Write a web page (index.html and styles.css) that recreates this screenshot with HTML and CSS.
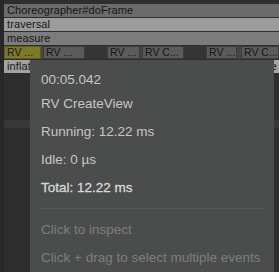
FILE: index.html
```html
<!DOCTYPE html>
<html>
<head>
<meta charset="utf-8">
<link rel="stylesheet" href="styles.css">
</head>
<body>
<div class="page">
  <div class="track">
    <div class="row row-frame">Choreographer#doFrame</div>
    <div class="row row-trav">traversal</div>
    <div class="row row-meas">measure</div>
    <div class="row row-rv">
      <div class="slice slice-sel w37">RV ...</div>
      <div class="gap2"></div>
      <div class="slice w42">RV ...</div>
      <div class="empty w22"></div>
      <div class="slice w33">RV ...</div>
      <div class="gap2"></div>
      <div class="slice w42">RV C...</div>
      <div class="empty w22"></div>
      <div class="slice w31">RV ...</div>
      <div class="gap3"></div>
      <div class="slice grow">RV C...</div>
    </div>
    <div class="row row-infl"><span>inflate</span><span class="tail">inflate</span></div>
    <div class="spacer"></div>
    <div class="band"></div>
  </div>
  <div class="tooltip">
    <div class="line first">00:05.042</div>
    <div class="line">RV CreateView</div>
    <div class="line">Running: 12.22 ms</div>
    <div class="line">Idle: 0 µs</div>
    <div class="line total">Total: 12.22 ms</div>
    <div class="sep"></div>
    <div class="line hint">Click to inspect</div>
    <div class="line hint">Click + drag to select multiple events</div>
  </div>
</div>
</body>
</html>
```

FILE: styles.css
```css
html, body {
  margin: 0;
  padding: 0;
  background: #282828;
  width: 279px;
  height: 272px;
  overflow: hidden;
}
.page {
  position: relative;
  width: 279px;
  height: 272px;
  padding-left: 4px;
  box-sizing: border-box;
  overflow: hidden;
}
.track {
  background: #2e2e2e;
  height: 272px;
  padding-top: 4px;
  box-sizing: border-box;
  display: flex;
  flex-direction: column;
  gap: 1px;
  font-family: "Liberation Sans", Arial, sans-serif;
  font-size: 11px;
  letter-spacing: 0.1px;
  color: #161616;
}
.row {
  height: 13px;
  line-height: 13px;
  padding-left: 3px;
  white-space: nowrap;
  overflow: hidden;
  flex-shrink: 0;
}
.row-frame { background: #6b6b6b; }
.row-trav { background: #9c9c9c; }
.row-meas { background: #7c7c7c; }
.row-infl {
  background: #a3a3a3;
  display: flex;
  justify-content: space-between;
  padding-right: 2px;
}
.row-rv {
  display: flex;
  padding-left: 0;
  background: #454545;
}
.slice {
  box-sizing: border-box;
  border: 1px solid #3c3c3c;
  background: #5b5b5b;
  padding-left: 2px;
  font-size: 10.5px;
  letter-spacing: 0;
  line-height: 11px;
  overflow: hidden;
  flex-shrink: 0;
}
.slice-sel {
  background: #7c7a26;
  border-color: #5e5c1c;
}
.w37 { width: 37px; }
.w42 { width: 42px; }
.w33 { width: 33px; }
.w31 { width: 31px; }
.w22 { width: 22px; }
.grow { flex: 1; }
.gap2 { width: 2px; flex-shrink: 0; }
.gap3 { width: 4px; flex-shrink: 0; }
.empty { background: #353535; flex-shrink: 0; }
.spacer { height: 45px; flex-shrink: 0; }
.band { height: 8px; background: #383838; flex-shrink: 0; }

.tooltip {
  position: absolute;
  left: 30px;
  top: 60px;
  width: 244px;
  height: 212px;
  box-sizing: border-box;
  background: #4b4d4c;
  padding: 6px 10px 0 11px;
  font-family: "Liberation Sans", Arial, sans-serif;
  font-size: 13.5px;
  color: #c6c6c6;
  overflow: hidden;
}
.line {
  height: 28px;
  line-height: 28px;
  white-space: nowrap;
}
.line.first { height: 24px; }
.total { color: #d8d8d8; -webkit-text-stroke: 0.3px #d8d8d8; }
.sep {
  height: 1px;
  background: #585a59;
  margin: 6px 0 7px -1px;
}
.hint { color: #7c7e7d; }
```
